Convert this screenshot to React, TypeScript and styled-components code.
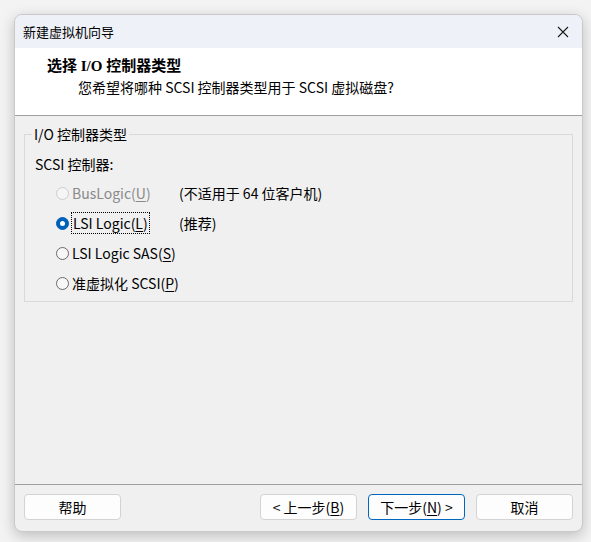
import styled, { createGlobalStyle } from "styled-components";

const GlobalStyle = createGlobalStyle`
  html, body {
    margin: 0;
    padding: 0;
    background: #f3f3f3;
  }
  body {
    font-family: "Noto Sans CJK SC", "Noto Sans", sans-serif;
    font-size: 14px;
    color: #000;
  }
`;

const Desktop = styled.div`
  width: 591px;
  height: 542px;
  padding: 14px 8px 10px 14px;
  box-sizing: border-box;
`;

const Window = styled.div`
  width: 569px;
  height: 518px;
  border-radius: 8px;
  border: 1px solid #c9c9c9;
  box-sizing: border-box;
  background: #f0f0f0;
  box-shadow: 0 4px 14px rgba(0, 0, 0, 0.22);
  overflow: hidden;
  display: flex;
  flex-direction: column;
`;

const TitleBar = styled.div`
  height: 33px;
  background: #eef2f8;
  display: flex;
  align-items: center;
  justify-content: space-between;
  padding: 0 12px 0 8px;
  font-size: 13px;
`;

const CloseButton = styled.div`
  width: 14px;
  height: 14px;
  display: flex;
  align-items: center;
  justify-content: center;
`;

const Header = styled.div`
  height: 68px;
  background: #fff;
  border-bottom: 1px solid #a0a0a0;
  padding: 8px 0 0 32px;
  box-sizing: border-box;
`;

const HeaderTitle = styled.div`
  font-family: "Liberation Serif", "Noto Sans CJK SC", serif;
  font-weight: bold;
  font-size: 15px;
  line-height: 21px;
`;

const HeaderSub = styled.div`
  padding-left: 31px;
  line-height: 20px;
`;

const Body = styled.div`
  flex: 1;
  padding: 10px 9px 0 9px;
`;

const GroupBox = styled.fieldset`
  margin: 0;
  height: 176px;
  box-sizing: border-box;
  border: 1px solid #d9d9d9;
  padding: 0 0 0 10px;
`;

const Legend = styled.legend`
  padding: 0 2px;
  margin-left: -3px;
  line-height: 17px;
`;

const ControllerLabel = styled.div`
  line-height: 20px;
  margin-top: 11px;
  margin-bottom: 4px;
`;

const OptionRow = styled.div`
  display: flex;
  align-items: center;
  height: 30px;
  padding-left: 21px;
`;

const Radio = styled.span<{ $checked?: boolean; $disabled?: boolean }>`
  width: 13px;
  height: 13px;
  border-radius: 50%;
  box-sizing: border-box;
  flex-shrink: 0;
  border: 1px solid ${(p) => (p.$checked ? "#005fb8" : p.$disabled ? "#cdcdcd" : "#6a6a6a")};
  background: ${(p) => (p.$checked ? "#005fb8" : p.$disabled ? "#f5f5f5" : "#f7f7f7")};
  display: flex;
  align-items: center;
  justify-content: center;
  margin-right: 3px;

  &::after {
    content: "";
    display: ${(p) => (p.$checked ? "block" : "none")};
    width: 5px;
    height: 5px;
    border-radius: 50%;
    background: #fff;
  }
`;

const OptionText = styled.span<{ $disabled?: boolean }>`
  width: 107px;
  color: ${(p) => (p.$disabled ? "#8a8a8a" : "#000")};
  line-height: 18px;

  span.focus {
    outline: 1px dotted #000;
    outline-offset: 0;
    padding: 0 1px;
  }
`;

const Note = styled.span`
  line-height: 18px;
`;

const U = styled.u`
  text-underline-offset: 2px;
`;

const Footer = styled.div`
  height: 46px;
  border-top: 1px solid #a0a0a0;
  display: flex;
  align-items: center;
  padding: 0 9px;
  gap: 11px;
`;

const Spacer = styled.div`
  flex: 1;
`;

const Button = styled.button<{ $default?: boolean }>`
  width: 97px;
  height: 26px;
  background: #fdfdfd;
  border: 1px solid ${(p) => (p.$default ? "#0067c0" : "#d3d3d3")};
  border-radius: 4px;
  font-family: inherit;
  font-size: 14px;
  color: #000;
  padding: 0;
  margin-top: -2px;
`;

const options = [
  { label: "BusLogic", key: "U", note: "(不适用于 64 位客户机)", disabled: true },
  { label: "LSI Logic", key: "L", note: "(推荐)", checked: true },
  { label: "LSI Logic SAS", key: "S" },
  { label: "准虚拟化 SCSI", key: "P" },
];

export default function App() {
  return (
    <>
      <GlobalStyle />
      <Desktop>
        <Window>
          <TitleBar>
            <span>新建虚拟机向导</span>
            <CloseButton>
              <svg width="12" height="12" viewBox="0 0 12 12">
                <path d="M1 1L11 11M11 1L1 11" stroke="#1a1a1a" strokeWidth="1.1" />
              </svg>
            </CloseButton>
          </TitleBar>
          <Header>
            <HeaderTitle>选择 I/O 控制器类型</HeaderTitle>
            <HeaderSub>您希望将哪种 SCSI 控制器类型用于 SCSI 虚拟磁盘?</HeaderSub>
          </Header>
          <Body>
            <GroupBox>
              <Legend>I/O 控制器类型</Legend>
              <ControllerLabel>SCSI 控制器:</ControllerLabel>
              {options.map((o) => {
                const text = (
                  <>
                    {o.label}(<U>{o.key}</U>)
                  </>
                );
                return (
                  <OptionRow key={o.key}>
                    <Radio $checked={o.checked} $disabled={o.disabled} />
                    <OptionText $disabled={o.disabled}>
                      {o.checked ? <span className="focus">{text}</span> : text}
                    </OptionText>
                    {o.note && <Note>{o.note}</Note>}
                  </OptionRow>
                );
              })}
            </GroupBox>
          </Body>
          <Footer>
            <Button>帮助</Button>
            <Spacer />
            <Button>
              &lt; 上一步(<U>B</U>)
            </Button>
            <Button $default>
              下一步(<U>N</U>) &gt;
            </Button>
            <Button>取消</Button>
          </Footer>
        </Window>
      </Desktop>
    </>
  );
}
